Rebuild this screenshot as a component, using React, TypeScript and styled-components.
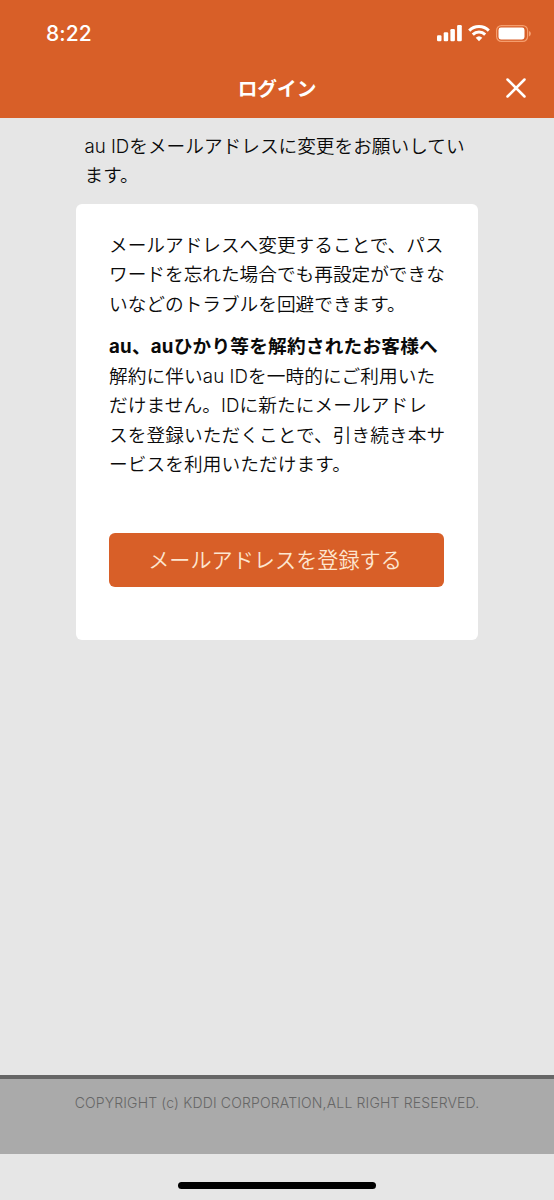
import React from "react";
import styled, { createGlobalStyle } from "styled-components";

const GlobalStyle = createGlobalStyle`
  * { box-sizing: border-box; }
  body {
    margin: 0;
    background: #e6e6e6;
    color: #0a0a0a;
    font-family: Inter, "Noto Sans CJK JP", sans-serif;
  }
`;

const Screen = styled.div`
  display: flex;
  flex-direction: column;
  width: 554px;
  height: 1200px;
  overflow: hidden;
  background: #e6e6e6;
`;

const Header = styled.header`
  height: 118px;
  flex: none;
  background: #d85f28;
  color: #fff;
`;

const StatusBar = styled.div`
  display: flex;
  align-items: center;
  justify-content: space-between;
  height: 59px;
  padding: 8px 23px 0 46px;
`;

const Clock = styled.span`
  font-size: 21px;
  font-weight: 550;
  line-height: 26px;
  letter-spacing: 0.1px;
`;

const StatusIcons = styled.div`
  display: flex;
  align-items: center;
  gap: 6px;
  svg { display: block; }
`;

const TitleBar = styled.div`
  display: grid;
  grid-template-columns: 60px 1fr 60px;
  align-items: center;
  height: 59px;
`;

const Title = styled.h1`
  grid-column: 2;
  margin: 0;
  padding-top: 1px;
  text-align: center;
  font-size: 19.7px;
  font-weight: 700;
  line-height: 30px;
`;

const CloseButton = styled.button`
  display: flex;
  justify-content: center;
  padding: 0;
  border: 0;
  background: none;
  color: inherit;
  margin: 0 16px 1px 0;
`;

const Main = styled.main`
  flex: 1;
  padding: 14px 76px 0;
`;

const Paragraph = styled.p<{ $tracking?: number }>`
  margin: 0;
  font-size: 18.67px;
  font-weight: 350;
  line-height: 29.4px;
  letter-spacing: ${(p) => p.$tracking ?? 0}px;
  white-space: nowrap;
`;

const Intro = styled(Paragraph)`
  padding-left: 8.5px;
`;

const Subheading = styled.h2`
  margin: 13px 0 0;
  font-size: 18.67px;
  font-weight: 700;
  line-height: 30px;
  letter-spacing: 0.22px;
  white-space: nowrap;
`;

const Card = styled.section`
  height: 436px;
  margin-top: 13px;
  padding: 27px 33px 0;
  border-radius: 6px;
  background: #fff;
`;

const RegisterButton = styled.button`
  display: block;
  width: 335px;
  height: 54px;
  margin-top: 53px;
  padding: 0 3px 3px 0;
  border: 0;
  border-radius: 6px;
  background: #d85f28;
  color: #fde6d0;
  font-family: inherit;
  font-size: 21.15px;
  font-weight: 350;
`;

const Footer = styled.footer`
  flex: none;
  height: 79px;
  margin-bottom: 46px;
  padding-top: 14px;
  border-top: 4px solid #666;
  background: #aaa;
  color: #666;
  text-align: center;
  font-size: 14px;
  font-weight: 300;
  line-height: 20px;
  letter-spacing: 0.16px;
`;

const HomeIndicator = styled.div`
  position: absolute;
  left: 178px;
  top: 1182px;
  width: 198px;
  height: 7px;
  border-radius: 4px;
  background: #000;
`;

export default function App() {
  return (
    <Screen>
      <GlobalStyle />
      <Header>
        <StatusBar>
          <Clock>8:22</Clock>
          <StatusIcons>
            <svg width="25" height="17" viewBox="0 0 25 17" fill="#fff">
              <rect x="0" y="10.3" width="4.5" height="6" rx="1.2" />
              <rect x="6.7" y="7.3" width="4.5" height="9" rx="1.2" />
              <rect x="13.4" y="4" width="4.5" height="12.3" rx="1.2" />
              <rect x="20.1" y="0" width="4.7" height="16.3" rx="1.2" />
            </svg>
            <svg width="22" height="17" viewBox="0 0 22 17" fill="none" stroke="#fff" strokeWidth="3">
              <path d="M1.2 5.6a14 14 0 0 1 19.6 0M4.8 9.6a8.9 8.9 0 0 1 12.4 0" />
              <path d="M11 16.2l-3.3-3.4a4.8 4.8 0 0 1 6.6 0z" fill="#fff" stroke="none" />
            </svg>
            <svg width="35" height="17" viewBox="0 0 35 17" fill="none">
              <rect x=".6" y=".6" width="31" height="15.8" rx="4.8" stroke="#ffb184" strokeOpacity=".75" strokeWidth="1.2" />
              <rect x="2.5" y="2.5" width="26" height="12" rx="2.4" fill="#fff" />
              <path d="M33 6v5.4q1.9-.8 1.9-2.7T33 6" fill="#ffb184" opacity=".8" />
            </svg>
          </StatusIcons>
        </StatusBar>
        <TitleBar>
          <Title>ログイン</Title>
          <CloseButton aria-label="閉じる">
            <svg width="20" height="20" viewBox="0 0 20 20" stroke="#fff" strokeWidth="2.5" strokeLinecap="round">
              <path d="M1.5 1.5l17 17M18.5 1.5l-17 17" />
            </svg>
          </CloseButton>
        </TitleBar>
      </Header>
      <Main>
        <Intro>
          au IDをメールアドレスに変更をお願いしてい
          <br />
          ます。
        </Intro>
        <Card>
          <Paragraph>
            メールアドレスへ変更することで、パス
            <br />
            ワードを忘れた場合でも再設定ができな
            <br />
            いなどのトラブルを回避できます。
          </Paragraph>
          <Subheading>au、auひかり等を解約されたお客様へ</Subheading>
          <Paragraph $tracking={0.1}>
            解約に伴いau IDを一時的にご利用いた
            <br />
            だけません。IDに新たにメールアドレ
            <br />
            スを登録いただくことで、引き続き本サ
            <br />
            ービスを利用いただけます。
          </Paragraph>
          <RegisterButton>メールアドレスを登録する</RegisterButton>
        </Card>
      </Main>
      <Footer>COPYRIGHT (c) KDDI CORPORATION,ALL RIGHT RESERVED.</Footer>
      <HomeIndicator />
    </Screen>
  );
}
